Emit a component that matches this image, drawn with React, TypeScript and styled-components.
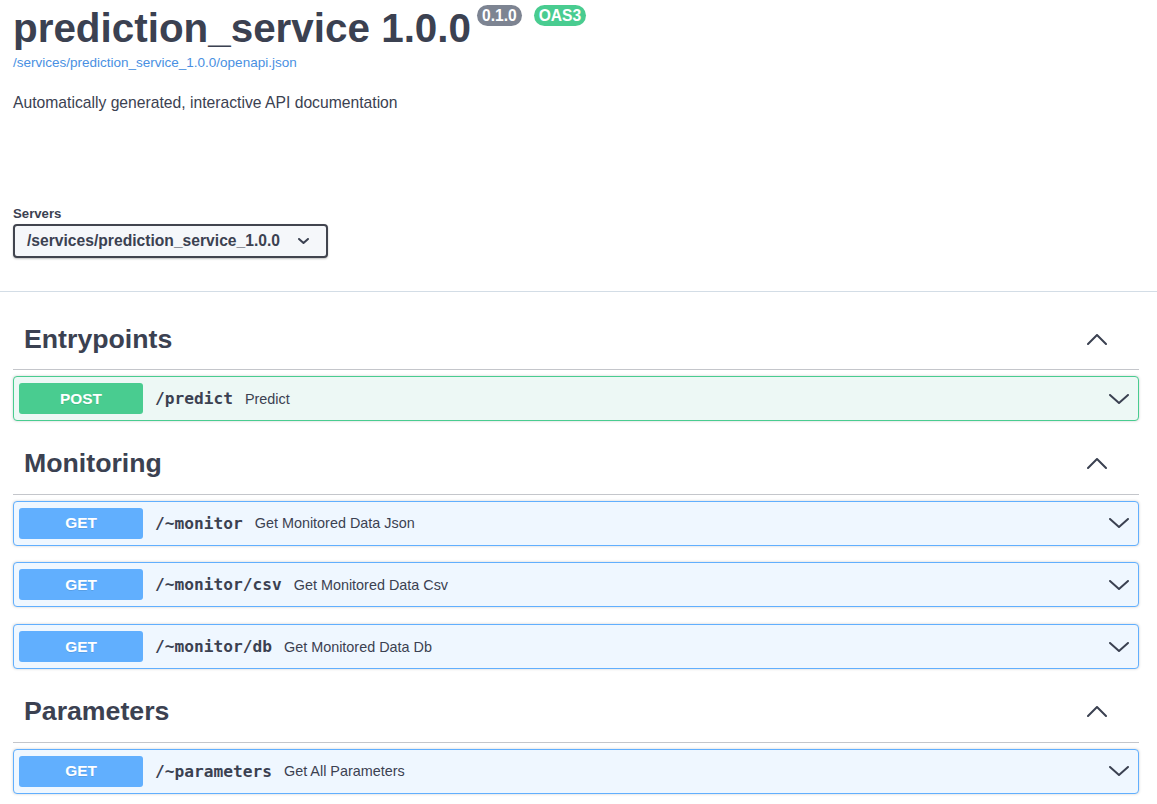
import React from "react";
import styled, { createGlobalStyle } from "styled-components";

const Global = createGlobalStyle`
  html, body { margin: 0; padding: 0; background: #fff; }
  body { font-family: "Liberation Sans", Arial, sans-serif; color: #3b4151; }
`;

const Page = styled.div`
  width: 100%;
`;

const Wrap = styled.div`
  padding: 0 18px 0 13px;
`;

const Info = styled.section`
  padding-top: 5px;
  padding-bottom: 61px;
`;

const TitleRow = styled.div`
  display: flex;
  align-items: flex-start;
`;

const Title = styled.h2`
  margin: 0;
  font-size: 40.4px;
  line-height: 46px;
  font-weight: 700;
  color: #3b4151;
`;

const Badge = styled.span<{ $bg: string; $gap: number }>`
  display: inline-block;
  margin-left: ${(p) => p.$gap}px;
  padding: 2px 5px;
  border-radius: 57px;
  background: ${(p) => p.$bg};
  color: #fff;
  font-size: 15.6px;
  line-height: 17px;
  font-weight: 700;
`;

const Link = styled.a`
  display: block;
  margin-top: 4px;
  font-size: 13.5px;
  line-height: 16px;
  color: #4990e2;
  text-decoration: none;
`;

const Description = styled.p`
  margin: 23px 0 0;
  font-size: 15.7px;
  line-height: 18px;
  color: #3b4151;
`;

const SchemeContainer = styled.section`
  padding: 33px 0 33px;
  border-bottom: 1px solid #d3dde6;
`;

const Label = styled.div`
  font-size: 13.2px;
  line-height: 15px;
  font-weight: 700;
  color: #3b4151;
`;

const Select = styled.div`
  margin-top: 3px;
  display: inline-flex;
  align-items: center;
  box-sizing: border-box;
  height: 34px;
  padding: 0 17px 0 12px;
  border: 2px solid #41444e;
  border-radius: 4px;
  background: #f5f7fa;
  box-shadow: 0 1px 2px 0 rgba(0, 0, 0, 0.25);
  font-size: 15.65px;
  font-weight: 700;
  color: #3b4151;
  gap: 18px;
`;

const Tags = styled.div`
  padding-top: 21px;
`;

const TagSection = styled.section`
  margin-bottom: 0;
`;

const TagHeader = styled.h3`
  margin: 0 0 6px;
  box-sizing: border-box;
  height: 57px;
  padding: 0 32px 4px 11px;
  display: flex;
  align-items: center;
  justify-content: space-between;
  border-bottom: 1px solid #c4c6cb;
  font-size: 26.7px;
  font-weight: 700;
  color: #3b4151;
`;

const OpBlock = styled.div<{ $color: string; $bg: string }>`
  box-sizing: border-box;
  height: 45px;
  margin-bottom: 16.7px;
  padding: 6px 9px 6px 5px;
  display: flex;
  align-items: center;
  border: 1px solid ${(p) => p.$color};
  border-radius: 4px;
  background: ${(p) => p.$bg};
  box-shadow: 0 0 3px rgba(0, 0, 0, 0.19);
`;

const Method = styled.span<{ $color: string }>`
  flex: none;
  width: 124px;
  height: 31px;
  display: flex;
  align-items: center;
  justify-content: center;
  border-radius: 3px;
  background: ${(p) => p.$color};
  color: #fff;
  font-size: 15.4px;
  font-weight: 700;
  text-shadow: 0 1px 0 rgba(0, 0, 0, 0.1);
`;

const Path = styled.span`
  margin-left: 12px;
  font-family: "DejaVu Sans Mono", "Liberation Mono", monospace;
  font-size: 16.2px;
  font-weight: 700;
  color: #3b4151;
`;

const Summary = styled.span`
  margin-left: 12px;
  flex: 1;
  font-size: 14.4px;
  color: #3b4151;
`;

const Chevron = ({ up, w = 19, h = 10 }: { up?: boolean; w?: number; h?: number }) => (
  <svg width={w} height={h} viewBox={`0 0 ${w} ${h}`} fill="none" style={{ flex: "none" }}>
    <polyline
      points={up ? `1,${h - 1} ${w / 2},1 ${w - 1},${h - 1}` : `1,1 ${w / 2},${h - 1} ${w - 1},1`}
      stroke="#3b4151"
      strokeWidth="2"
      strokeLinecap="round"
      strokeLinejoin="round"
    />
  </svg>
);

type Op = { method: "GET" | "POST"; path: string; summary: string };

const methodColors = {
  GET: { color: "#61affe", bg: "#eff7ff" },
  POST: { color: "#49cc90", bg: "#edf8f5" },
};

const tags: { name: string; ops: Op[] }[] = [
  { name: "Entrypoints", ops: [{ method: "POST", path: "/predict", summary: "Predict" }] },
  {
    name: "Monitoring",
    ops: [
      { method: "GET", path: "/~monitor", summary: "Get Monitored Data Json" },
      { method: "GET", path: "/~monitor/csv", summary: "Get Monitored Data Csv" },
      { method: "GET", path: "/~monitor/db", summary: "Get Monitored Data Db" },
    ],
  },
  {
    name: "Parameters",
    ops: [{ method: "GET", path: "/~parameters", summary: "Get All Parameters" }],
  },
];

export default function App() {
  return (
    <Page>
      <Global />
      <Wrap>
        <Info>
          <TitleRow>
            <Title>prediction_service 1.0.0</Title>
            <Badge $bg="#7d8492" $gap={6}>0.1.0</Badge>
            <Badge $bg="#49cc90" $gap={12}>OAS3</Badge>
          </TitleRow>
          <Link href="#">/services/prediction_service_1.0.0/openapi.json</Link>
          <Description>Automatically generated, interactive API documentation</Description>
        </Info>
      </Wrap>
      <SchemeContainer>
        <Wrap>
          <Label>Servers</Label>
          <Select>
            <span>/services/prediction_service_1.0.0</span>
            <Chevron w={11} h={6} />
          </Select>
        </Wrap>
      </SchemeContainer>
      <Wrap>
        <Tags>
          {tags.map((t) => (
            <TagSection key={t.name}>
              <TagHeader>
                <span>{t.name}</span>
                <Chevron up w={20} h={11} />
              </TagHeader>
              {t.ops.map((o) => (
                <OpBlock key={o.path} $color={methodColors[o.method].color} $bg={methodColors[o.method].bg}>
                  <Method $color={methodColors[o.method].color}>{o.method}</Method>
                  <Path>{o.path}</Path>
                  <Summary>{o.summary}</Summary>
                  <Chevron w={20} h={10} />
                </OpBlock>
              ))}
            </TagSection>
          ))}
        </Tags>
      </Wrap>
    </Page>
  );
}
